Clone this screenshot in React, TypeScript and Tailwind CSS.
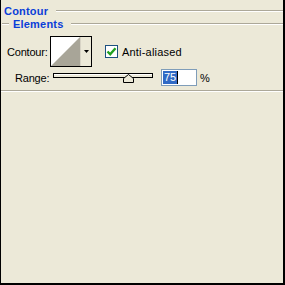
export default function App() {
  return (
    <div className="w-[285px] h-[285px] bg-[#ece9d8] border-l border-r-2 border-b-2 border-black font-['Liberation_Sans',_Arial,_sans-serif] text-[11px] leading-[14px] text-black overflow-hidden">
      {/* Section header */}
      <div className="flex items-center h-[14px] mt-[4px] pl-[3px]">
        <span className="font-bold text-[#0a3ed8] tracking-[0.2px]">Contour</span>
        <div className="ml-[8px] flex-1">
          <div className="h-px bg-[#aca899]" />
          <div className="h-px bg-white" />
        </div>
      </div>

      {/* Group header */}
      <div className="flex items-center h-[14px] mt-[-1px]">
        <div className="ml-[1px] w-[7px]">
          <div className="h-px bg-[#aca899]" />
          <div className="h-px bg-white" />
        </div>
        <span className="ml-[4px] font-bold text-[#0a3ed8] tracking-[0.2px]">Elements</span>
        <div className="ml-[7px] flex-1">
          <div className="h-px bg-[#aca899]" />
          <div className="h-px bg-white" />
        </div>
      </div>

      {/* Contour row */}
      <div className="flex items-center mt-[5px] pl-[6px] h-[31px]">
        <span className="w-[43px] tracking-[-0.2px]">Contour:</span>
        <div className="flex w-[42px] h-[31px] border border-black bg-white">
          <svg width="29" height="29" viewBox="0 0 29 29" className="block">
            <rect width="29" height="29" fill="#ffffff" />
            <polygon points="0,29 29,0 29,29" fill="#a8a598" />
          </svg>
          <div className="flex-1 flex items-center justify-center bg-[#ece9d8] border-l border-[#d8d4c6]">
            <svg width="5" height="3" viewBox="0 0 5 3" className="block">
              <polygon points="0,0 5,0 2.5,3" fill="#000" />
            </svg>
          </div>
        </div>
        <div className="ml-[13px] flex items-center">
          <div className="w-[13px] h-[13px] border border-[#1c5180] bg-white flex items-center justify-center">
            <svg width="11" height="11" viewBox="0 0 11 11" className="block">
              <path d="M1.5 5.5 L4.2 8.3 L9.5 2.2" stroke="#21a121" strokeWidth="2.4" fill="none" />
            </svg>
          </div>
          <span className="ml-[4px] tracking-[0.2px]">Anti-aliased</span>
        </div>
      </div>

      {/* Range row */}
      <div className="flex items-center mt-[2px] h-[17px] pl-[14px]">
        <span className="w-[38px] tracking-[-0.2px]">Range:</span>
        <div className="relative w-[100px] h-[5px] border border-black bg-[#ece9d8] mt-[-4px]">
          <div className="h-px bg-white" />
          <svg width="11" height="9" viewBox="0 0 11 9" className="absolute left-[69px] top-[0px] block">
            <polygon points="5.5,0.5 10.5,4.5 10.5,8.5 0.5,8.5 0.5,4.5" fill="#ece9d8" stroke="#000" strokeWidth="1" />
          </svg>
        </div>
        <div className="ml-[8px] w-[36px] h-[17px] border border-[#7f9db9] bg-white flex items-center pl-[1px]">
          <span className="bg-[#316ac5] text-white leading-[13px] px-[1px]">75</span>
          <span className="w-px h-[13px] bg-black" />
        </div>
        <span className="ml-[3px]">%</span>
      </div>

      {/* Separator */}
      <div className="mt-[4px]">
        <div className="h-px bg-[#aca899]" />
        <div className="h-px bg-white" />
      </div>
    </div>
  );
}
